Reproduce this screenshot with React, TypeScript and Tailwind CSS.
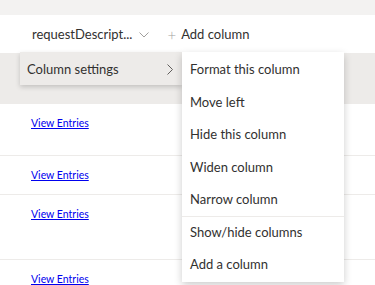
import React from 'react';

const font = { fontFamily: 'Lato, "Open Sans", sans-serif' };

const subItems = [
  ['Format this column', 'Move left', 'Hide this column', 'Widen column', 'Narrow column'],
  ['Show/hide columns', 'Add a column'],
];

const ChevronDown = () => (
  <svg width="10" height="6" viewBox="0 0 10 6" className="text-[#a19f9d]">
    <path d="M0.5 0.5 L5 5 L9.5 0.5" fill="none" stroke="currentColor" strokeWidth="1" />
  </svg>
);

const ChevronRight = () => (
  <svg width="6" height="11" viewBox="0 0 6 11" className="text-[#605e5c]">
    <path d="M0.5 0.5 L5.5 5.5 L0.5 10.5" fill="none" stroke="currentColor" strokeWidth="1" />
  </svg>
);

const Row = ({ h }: { h: string }) => (
  <div className={`${h} border-b border-[#edebe9] bg-white pl-[31px] pt-[12px] text-[10.5px] leading-[14px]`}>
    <a href="#" className="text-[#0000ee] underline">
      View Entries
    </a>
  </div>
);

export default function App() {
  return (
    <div className="relative h-[285px] w-[375px] overflow-hidden bg-white text-[#323130]" style={font}>
      <div className="h-[15px] bg-[#f3f2f1]" />

      {/* Header */}
      <div className="flex h-[38px] items-center bg-white pl-[32px] pt-[2px] text-[13px]">
        <span>requestDescript...</span>
        <span className="ml-[7px]">
          <ChevronDown />
        </span>
        <span className="ml-[18px] text-[15px] font-light text-[#a19f9d]">+</span>
        <span className="ml-[5px]">Add column</span>
      </div>

      <div className="h-[51px] bg-[#edebe9]" />

      <Row h="h-[52px]" />
      <Row h="h-[39px]" />
      <Row h="h-[65px]" />
      <Row h="h-[40px]" />

      {/* Column settings menu */}
      <div className="absolute left-[20px] top-[52px] flex h-[33px] w-[162px] items-center justify-between bg-[#edebe9] pl-[7px] pr-[9px] pt-[2px] text-[13px] shadow-[0_2px_5px_rgba(0,0,0,0.18)]">
        <span>Column settings</span>
        <ChevronRight />
      </div>

      {/* Submenu */}
      <div className="absolute left-[182px] top-[52px] w-[162px] bg-white pb-[1px] pt-[1px] text-[13px] shadow-[0_3px_8px_rgba(0,0,0,0.2)]">
        {subItems.map((group, gi) => (
          <div key={gi} className={gi > 0 ? 'border-t border-[#edebe9]' : ''}>
            {group.map((label) => (
              <div
                key={label}
                className={`${gi > 0 ? 'h-[32px]' : 'h-[32.5px]'} flex items-center px-[8px] pt-[1px]`}
              >
                {label}
              </div>
            ))}
          </div>
        ))}
      </div>
    </div>
  );
}
